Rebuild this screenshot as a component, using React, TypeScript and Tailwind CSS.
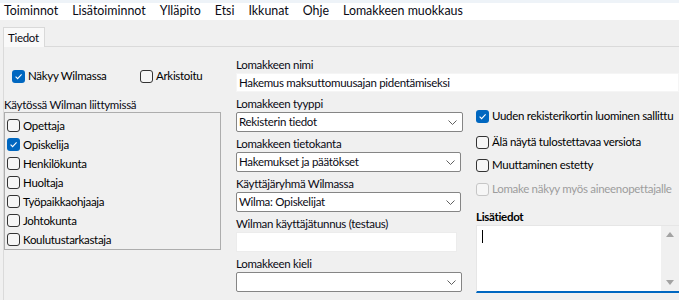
import React from 'react';

const Check = ({ checked, disabled }: { checked?: boolean; disabled?: boolean }) =>
  checked ? (
    <span className="w-[13px] h-[13px] shrink-0 rounded-[3px] bg-[#0067c0] flex items-center justify-center">
      <svg width="9" height="9" viewBox="0 0 9 9">
        <path d="M1.6 4.6 L3.6 6.6 L7.6 2.4" stroke="white" strokeWidth="1.1" fill="none" />
      </svg>
    </span>
  ) : (
    <span
      className={`w-[13px] h-[13px] shrink-0 rounded-[3px] border bg-[#f6f6f6] ${
        disabled ? 'border-[#c6c6c6]' : 'border-[#333333]'
      }`}
    />
  );

const CheckRow = ({ label, checked, disabled, className = '' }: { label: string; checked?: boolean; disabled?: boolean; className?: string }) => (
  <div className={`flex items-center gap-[3px] h-[16px] whitespace-nowrap ${className}`}>
    <Check checked={checked} disabled={disabled} />
    <span className={disabled ? 'text-[#9d9d9d]' : 'text-black'}>{label}</span>
  </div>
);

const Chevron = () => (
  <svg width="9" height="5" viewBox="0 0 9 5" className="shrink-0">
    <path d="M0.5 0.5 L4.5 4.5 L8.5 0.5" stroke="#606060" strokeWidth="1" fill="none" />
  </svg>
);

const Select = ({ value, width }: { value: string; width: string }) => (
  <div className={`${width} h-[20px] bg-white border border-[#858585] rounded-[2px] flex items-center justify-between pl-[2px] pr-[5px]`}>
    <span>{value}</span>
    <Chevron />
  </div>
);

const Field = ({ label, children }: { label: string; children: React.ReactNode }) => (
  <div className="mt-[6px]">
    <div className="h-[14px] leading-[14px] -mt-px">{label}</div>
    <div className="mt-px">{children}</div>
  </div>
);

const menu = ['Toiminnot', 'Lisätoiminnot', 'Ylläpito', 'Etsi', 'Ikkunat', 'Ohje', 'Lomakkeen muokkaus'];

const roles = ['Opettaja', 'Opiskelija', 'Henkilökunta', 'Huoltaja', 'Työpaikkaohjaaja', 'Johtokunta', 'Koulutustarkastaja'];

export default function App() {
  return (
    <div className="w-[679px] h-[300px] overflow-hidden bg-[#f0f0f0] text-[11.5px] tracking-[-0.3px] text-[#0a0a14] font-['Lato',sans-serif]">
      <div className="h-[3px] bg-[#eef3f8]" />
      <div className="h-[17px] bg-white flex items-center gap-[14px] pl-[4px] pb-[1px] text-[12.4px] tracking-normal">
        {menu.map((m) => (
          <span key={m}>{m}</span>
        ))}
      </div>
      <div className="h-[26px] flex items-end pl-[3px]">
        <div className="h-[20px] w-[42px] bg-[#f9f9f9] border border-b-0 border-[#d9d9d9] flex items-center pl-[4px] -mb-px relative">
          Tiedot
        </div>
      </div>
      <div className="ml-[3px] border-l border-t border-[#dadada] h-[254px] flex">
        <div className="w-[217px] shrink-0 flex flex-col">
          <div className="mt-[21px] h-[16px] flex items-center pl-[8px]">
            <CheckRow label="Näkyy Wilmassa" checked className="w-[128px]" />
            <CheckRow label="Arkistoitu" />
          </div>
          <div className="mt-[14px] h-[14px] leading-[14px]">Käytössä Wilman liittymissä</div>
          <div className="h-[138px] border border-[#adadad] pt-[3px] pl-[2px]">
            {roles.map((r) => (
              <div key={r} className="h-[19px] flex items-center">
                <CheckRow label={r} checked={r === 'Opiskelija'} />
              </div>
            ))}
          </div>
        </div>
        <div className="ml-[15px] flex-1 min-w-0 flex flex-col">
          <div className="mt-[11px] h-[14px] leading-[14px]">Lomakkeen nimi</div>
          <div className="mt-px h-[19px] w-[443px] bg-white border border-[#f5f5f5] flex items-center pl-[2px]">
            Hakemus maksuttomuusajan pidentämiseksi
          </div>
          <div className="flex">
            <div className="w-[240px] shrink-0 flex flex-col">
              <Field label="Lomakkeen tyyppi">
                <Select value="Rekisterin tiedot" width="w-[227px]" />
              </Field>
              <Field label="Lomakkeen tietokanta">
                <Select value="Hakemukset ja päätökset" width="w-[225px]" />
              </Field>
              <Field label="Käyttäjäryhmä Wilmassa">
                <Select value="Wilma: Opiskelijat" width="w-[225px]" />
              </Field>
              <Field label="Wilman käyttäjätunnus (testaus)">
                <div className="w-[221px] h-[20px] bg-white border border-[#ececec]" />
              </Field>
              <Field label="Lomakkeen kieli">
                <Select value="" width="w-[226px]" />
              </Field>
            </div>
            <div className="flex-1 min-w-0 flex flex-col">
              <CheckRow label="Uuden rekisterikortin luominen sallittu" checked className="mt-[16px]" />
              <CheckRow label="Älä näytä tulostettavaa versiota" className="mt-[10px]" />
              <CheckRow label="Muuttaminen estetty" className="mt-[7px]" />
              <CheckRow label="Lomake näkyy myös aineenopettajalle" disabled className="mt-[8px]" />
              <div className="mt-[13px] h-[14px] leading-[14px] font-bold text-black">Lisätiedot</div>
              <div className="mt-px h-[68px] bg-white border-t border-l border-[#e6e6e6] border-b-2 border-b-[#0067c0] flex">
                <div className="flex-1 pl-[5px] pt-[4px]">
                  <div className="w-px h-[13px] bg-black" />
                </div>
                <div className="w-[18px] bg-[#f0f0f0] flex flex-col items-center justify-between py-[6px]">
                  <svg width="8" height="5" viewBox="0 0 8 5">
                    <path d="M0 5 L4 0 L8 5 Z" fill="#a3a3a3" />
                  </svg>
                  <svg width="8" height="5" viewBox="0 0 8 5">
                    <path d="M0 0 L4 5 L8 0 Z" fill="#a3a3a3" />
                  </svg>
                </div>
              </div>
            </div>
          </div>
        </div>
      </div>
    </div>
  );
}
